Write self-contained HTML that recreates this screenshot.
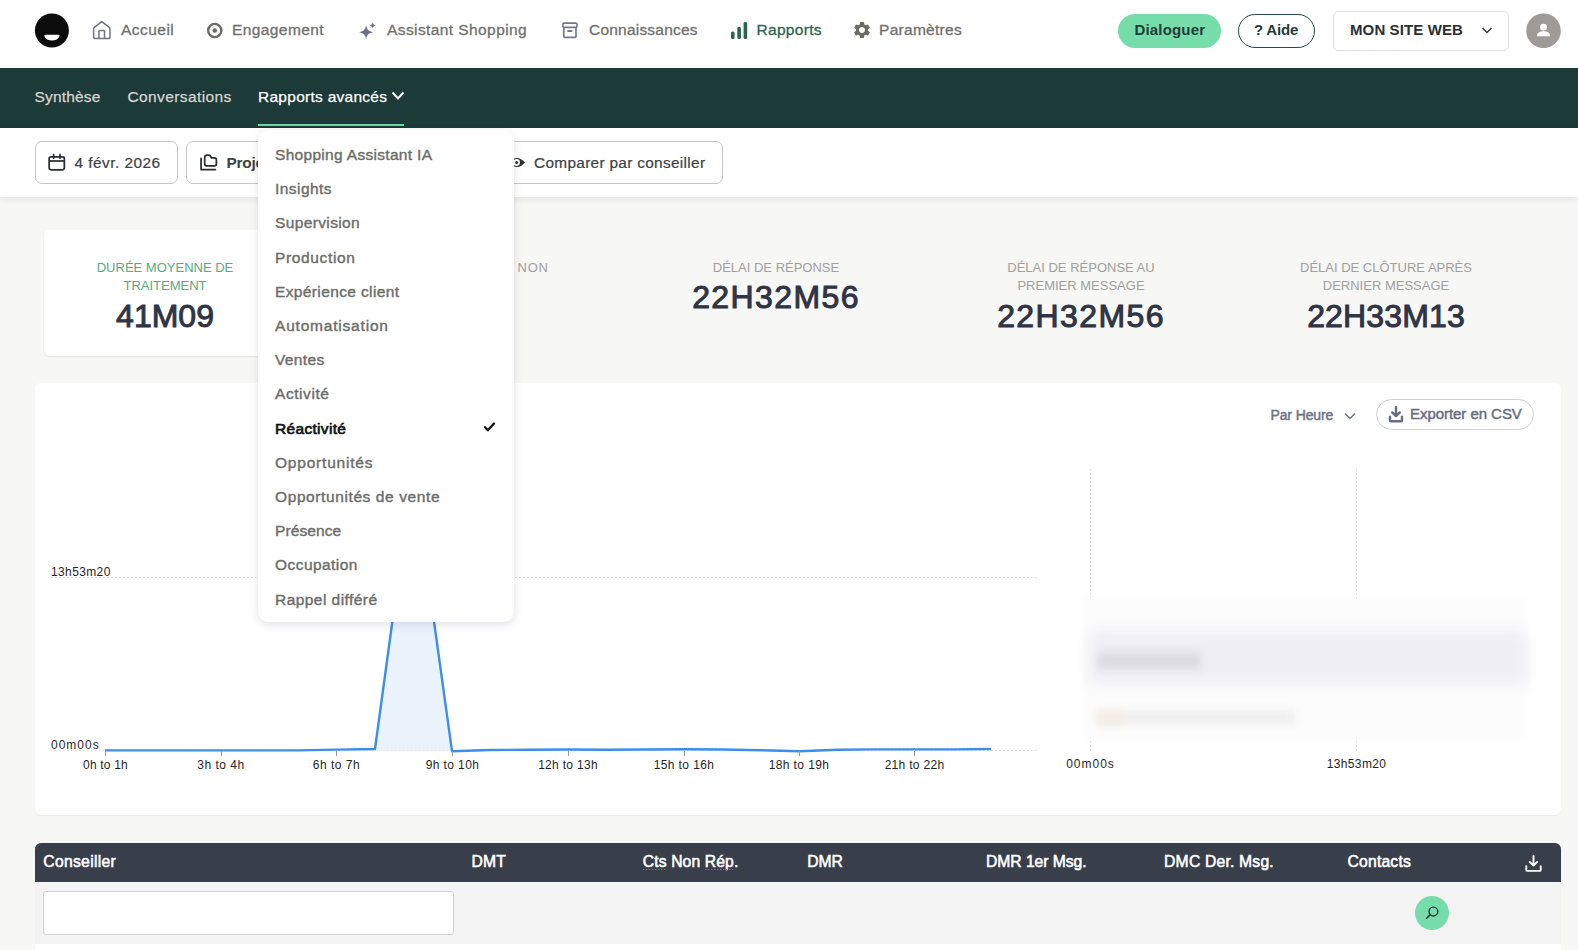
<!DOCTYPE html>
<html><head><meta charset="utf-8">
<style>
*{box-sizing:border-box;margin:0;padding:0}
html,body{width:1578px;height:950px;overflow:hidden;background:#f7f7f5;font-family:"Liberation Sans",sans-serif}
.a{position:absolute}
.t{position:absolute;white-space:nowrap;line-height:1}
#top{position:absolute;left:0;top:0;width:1578px;height:68px;background:#fff}
#sub{position:absolute;left:0;top:68px;width:1578px;height:60px;background:#1c3a38}
#filt{position:absolute;left:0;top:128px;width:1578px;height:69px;background:#fff;box-shadow:0 2px 7px rgba(60,60,100,.10)}
.nav{top:21.8px;font-size:15.5px;color:#70706c;-webkit-text-stroke:.3px currentColor}
.sn{top:88.5px;font-size:15.5px;color:#d8d6ce;-webkit-text-stroke:.25px currentColor}
.btn{position:absolute;top:141px;height:43px;border:1px solid #c6c6c6;border-radius:7px;background:#fff}
.bt{top:155px;font-size:15.4px;color:#3d4044;-webkit-text-stroke:.2px currentColor}
.kl{font-size:13px;color:#a0a09e;text-align:center;line-height:18.3px;text-transform:uppercase}
.kv{font-size:32px;font-weight:normal;-webkit-text-stroke:1px #2f3446;color:#2f3446;text-align:center}
#card{position:absolute;left:35px;top:383px;width:1526px;height:432px;background:#fff;border-radius:6px;box-shadow:0 1px 1px rgba(0,0,0,.05)}
.xl{top:759.3px;font-size:12px;color:#1f1f1f;transform:translateX(-50%)}
#th{position:absolute;left:35px;top:843px;width:1526px;height:39px;background:#393e4b;border-radius:6px 6px 0 0}
.th{top:854px;font-size:15.7px;color:#fff;font-weight:normal;-webkit-text-stroke:.55px #fff}
#fr{position:absolute;left:35px;top:882px;width:1526px;height:62px;background:#f3f3f3}
#tb{position:absolute;left:35px;top:944px;width:1526px;height:10px;background:#fff}
#dd{position:absolute;left:258px;top:130px;width:256px;height:492px;background:#fff;border-radius:10px;box-shadow:0 3px 10px rgba(50,50,90,.13)}
.di{left:275px;font-size:15.5px;color:#6c6c69;font-weight:normal;-webkit-text-stroke:.4px currentColor;letter-spacing:.45px}
</style></head><body>
<!-- TOP BAR -->
<div id="top"></div>
<svg class="a" style="left:34px;top:13px" width="36" height="36" viewBox="0 0 36 36"><circle cx="17.9" cy="17.55" r="17" fill="#0b0c0b"/><path d="M10.2 22.7 Q10.5 21.8 11.8 21.8 H24.1 Q25.4 21.8 25.7 22.7 C24.6 26 21.5 27.5 17.95 27.5 C14.4 27.5 11.3 26 10.2 22.7Z" fill="#fff"/></svg>
<svg class="a" style="left:92px;top:20px" width="20" height="20" viewBox="0 0 20 20" fill="none" stroke="#6f748b" stroke-width="1.5" stroke-linejoin="round"><path d="M1.6 8.7 Q1.6 7.9 2.3 7.4 L9.8 1.6 L17.3 7.4 Q18 7.9 18 8.7 V16.8 Q18 18.6 16.2 18.6 H3.4 Q1.6 18.6 1.6 16.8 Z"/><path d="M6.9 18.6 V11.6 Q6.9 10.6 7.9 10.6 H11.5 Q12.5 10.6 12.5 11.6 V18.6"/></svg>
<div class="t nav" style="left:121px;letter-spacing:.46px">Accueil</div>
<svg class="a" style="left:205px;top:21px" width="19" height="19" viewBox="0 0 19 19"><circle cx="9.75" cy="9.5" r="6.6" fill="none" stroke="#6b6b68" stroke-width="2.4"/><circle cx="9.75" cy="9.5" r="2.35" fill="#6b6b68"/></svg>
<div class="t nav" style="left:232px;letter-spacing:.41px">Engagement</div>
<svg class="a" style="left:357px;top:20px" width="20" height="20" viewBox="0 0 20 20" fill="#6b7086"><path d="M9.10 5.30 C10.07 9.85 11.45 11.23 16.00 12.20 C11.45 13.17 10.07 14.55 9.10 19.10 C8.13 14.55 6.75 13.17 2.20 12.20 C6.75 11.23 8.13 9.85 9.10 5.30Z"/><path d="M15.70 2.20 C16.15 4.31 16.79 4.95 18.90 5.40 C16.79 5.85 16.15 6.49 15.70 8.60 C15.25 6.49 14.61 5.85 12.50 5.40 C14.61 4.95 15.25 4.31 15.70 2.20Z"/></svg>
<div class="t nav" style="left:387px;letter-spacing:.41px">Assistant Shopping</div>
<svg class="a" style="left:561px;top:21px" width="18" height="19" viewBox="0 0 18 19" fill="none" stroke="#717790" stroke-width="1.65" stroke-linejoin="round"><rect x="1.8" y="2.1" width="14.2" height="4.3" rx="1.4"/><path d="M2.8 6.4 V15.6 Q2.8 16.4 3.6 16.4 H14.2 Q15 16.4 15 15.6 V6.4"/><path d="M7.1 10 H10.6" stroke-width="2" stroke-linecap="round"/></svg>
<div class="t nav" style="left:589px;letter-spacing:.21px">Connaissances</div>
<svg class="a" style="left:731px;top:21px" width="17" height="18" viewBox="0 0 17 18" fill="#2b6350"><rect x="0" y="10.5" width="3.6" height="7.5" rx="1.6"/><rect x="6.3" y="5.8" width="3.6" height="12.2" rx="1.6"/><rect x="12.6" y="1" width="3.6" height="17" rx="1.6"/></svg>
<div class="t nav" style="left:756.5px;color:#2b6350;letter-spacing:.31px">Rapports</div>
<svg class="a" style="left:852px;top:20px" width="20" height="20" viewBox="0 0 24 24" fill="#6b6b68"><path d="M19.14 12.94c.04-.3.06-.61.06-.94 0-.32-.02-.64-.07-.94l2.03-1.58a.49.49 0 0 0 .12-.61l-1.92-3.32a.488.488 0 0 0-.59-.22l-2.39.96c-.5-.38-1.030-.7-1.62-.94l-.36-2.540a.484.484 0 0 0-.48-.41h-3.84c-.24 0-.43.17-.47.41l-.36 2.54c-.59.24-1.13.57-1.62.94l-2.39-.96c-.22-.08-.47 0-.59.22L2.74 8.87c-.12.21-.08.47.12.61l2.03 1.58c-.05.3-.09.63-.09.94s.02.64.07.94l-2.03 1.58a.49.49 0 0 0-.12.61l1.92 3.32c.12.22.37.29.59.22l2.39-.96c.5.38 1.03.7 1.62.94l.36 2.54c.05.24.24.41.48.41h3.84c.24 0 .44-.17.47-.41l.36-2.54c.59-.24 1.13-.56 1.62-.94l2.39.96c.22.08.47 0 .59-.22l1.920-3.32c.12-.22.07-.47-.12-.61l-2.01-1.58zM12 15.6c-1.98 0-3.6-1.62-3.6-3.6s1.62-3.6 3.6-3.6 3.6 1.62 3.6 3.6-1.62 3.6-3.6 3.6z"/></svg>
<div class="t nav" style="left:879px;letter-spacing:.29px">Paramètres</div>

<div class="a" style="left:1118px;top:14px;width:103px;height:34px;border-radius:17px;background:#76dca9"></div>
<div class="t" style="left:1134.5px;top:21.6px;font-size:15px;font-weight:bold;color:#1f3d3a;letter-spacing:.17px">Dialoguer</div>
<div class="a" style="left:1238px;top:14px;width:77px;height:34px;border-radius:17px;border:1.6px solid #264a44"></div>
<div class="t" style="left:1254px;top:21.6px;font-size:15px;font-weight:bold;color:#1f3d3a;letter-spacing:-.2px">? Aide</div>
<div class="a" style="left:1333px;top:11px;width:176px;height:40px;border-radius:5px;border:1px solid #dedede"></div>
<div class="t" style="left:1350px;top:21.6px;font-size:15px;font-weight:bold;color:#2b2f34;letter-spacing:.11px">MON SITE WEB</div>
<svg class="a" style="left:1481px;top:26px" width="12" height="9" viewBox="0 0 12 9" fill="none" stroke="#3a3a3a" stroke-width="1.5"><path d="M1.5 2 L6 6.5 L10.5 2"/></svg>
<svg class="a" style="left:1526px;top:13px" width="35" height="35" viewBox="0 0 35 35"><circle cx="17.5" cy="17.8" r="17.3" fill="#9c9b96"/><circle cx="17.5" cy="14.2" r="3.4" fill="#fff"/><path d="M10.8 23.3 Q11.2 18.3 17.5 18.3 Q23.8 18.3 24.2 23.3 Z" fill="#fff"/></svg>

<!-- SUBNAV -->
<div id="sub"></div>
<div class="t sn" style="left:34.5px;letter-spacing:.17px">Synthèse</div>
<div class="t sn" style="left:127.5px;letter-spacing:.39px">Conversations</div>
<div class="t sn" style="left:258px;color:#fff;letter-spacing:.27px">Rapports avancés</div>
<svg class="a" style="left:391px;top:91px" width="14" height="10" viewBox="0 0 14 10" fill="none" stroke="#fff" stroke-width="2"><path d="M1.5 1.5 L7 7.5 L12.5 1.5"/></svg>
<div class="a" style="left:258px;top:124px;width:146px;height:2.3px;background:#6cd9a4"></div>

<!-- FILTER BAR -->
<div id="filt"></div>
<div class="btn" style="left:34.5px;width:143px"></div>
<svg class="a" style="left:47px;top:153px" width="20" height="19" viewBox="0 0 20 19" fill="none" stroke="#2b2e35" stroke-width="1.75" stroke-linejoin="round"><rect x="2.15" y="3.85" width="15.2" height="12.9" rx="1.9"/><path d="M2.15 8 H17.35"/><path d="M6.6 1.6 V5.2 M13 1.6 V5.2" stroke-linecap="round"/></svg>
<div class="t bt" style="left:74.6px;letter-spacing:.45px">4 févr. 2026</div>
<div class="btn" style="left:186px;width:200px"></div>
<svg class="a" style="left:199px;top:153px" width="20" height="19" viewBox="0 0 20 19" fill="none" stroke="#2b2e35" stroke-width="1.75" stroke-linejoin="round" stroke-linecap="round"><path d="M2.06 5.3 V16.5 H16.4"/><path d="M5.7 4.5 Q5.7 2 8 2 H9.9 Q10.6 2 11.1 2.6 L12.6 4.9 H15.4 Q17.4 4.9 17.4 6.9 V11 Q17.4 12.8 15.6 12.8 H7.5 Q5.7 12.8 5.7 11 Z"/></svg>
<div class="t bt" style="left:226.5px;font-weight:bold;letter-spacing:-.25px;-webkit-text-stroke:0">Projets</div>
<div class="btn" style="left:490px;width:233px"></div>
<svg class="a" style="left:508px;top:155px" width="18" height="15" viewBox="0 0 18 15" ><path d="M1 7.5 Q9 -1.5 17 7.5 Q9 16.5 1 7.5Z" fill="#2f3338"/><circle cx="8.6" cy="7.5" r="3.4" fill="#fff"/><circle cx="8.6" cy="7.5" r="1.5" fill="#2f3338"/></svg>
<div class="t bt" style="left:534px;letter-spacing:.31px">Comparer par conseiller</div>

<!-- KPIs -->
<div class="a" style="left:44px;top:229.5px;width:244px;height:126.5px;background:#fff;border-radius:6px;box-shadow:0 1px 2px rgba(0,0,0,.07)"></div>
<div class="t kl" style="left:43px;top:259px;width:244px;color:#55ab80">DURÉE MOYENNE DE<br>TRAITEMENT</div>
<div class="t kv" style="left:43px;top:300px;width:244px;letter-spacing:0">41M09</div>
<div class="t kl" style="left:300px;top:259px;width:248px;text-align:right">NB CONTACTS&nbsp;&nbsp;<span style="letter-spacing:.85px;margin-right:-.85px">NON</span></div><div class="t kl" style="left:348px;top:277.3px;width:244px">RÉPONDUES</div>
<div class="t kl" style="left:654px;top:259px;width:244px">DÉLAI DE RÉPONSE</div>
<div class="t kv" style="left:654px;top:281px;width:244px;letter-spacing:1.4px">22H32M56</div>
<div class="t kl" style="left:959px;top:259px;width:244px">DÉLAI DE RÉPONSE AU<br>PREMIER MESSAGE</div>
<div class="t kv" style="left:959px;top:300px;width:244px;letter-spacing:1.4px">22H32M56</div>
<div class="t kl" style="left:1264px;top:259px;width:244px">DÉLAI DE CLÔTURE APRÈS<br>DERNIER MESSAGE</div>
<div class="t kv" style="left:1264px;top:300px;width:244px;letter-spacing:.15px">22H33M13</div>

<!-- CHART CARD -->
<div id="card"></div>
<div class="t" style="left:1270.4px;top:408.4px;font-size:14px;color:#6c7282;-webkit-text-stroke:.45px #6c7282;letter-spacing:-.1px">Par Heure</div>
<svg class="a" style="left:1344px;top:412px" width="12" height="9" viewBox="0 0 12 9" fill="none" stroke="#6c7282" stroke-width="1.4"><path d="M1 1.5 L6 6.5 L11 1.5"/></svg>
<div class="a" style="left:1376px;top:399px;width:158px;height:31px;border:1px solid #cdd0d8;border-radius:16px"></div>
<svg class="a" style="left:1388px;top:406px" width="16" height="17" viewBox="0 0 16 17"><path d="M8 1.2 V10 M4.2 6.4 L8 10.2 L11.8 6.4" fill="none" stroke="#666d80" stroke-width="2.4" stroke-linecap="round" stroke-linejoin="round"/><path d="M2 10.6 V14.6 Q2 15.3 2.7 15.3 H13.3 Q14 15.3 14 14.6 V10.6" fill="none" stroke="#666d80" stroke-width="2.4" stroke-linecap="round" stroke-linejoin="round"/></svg>
<div class="t" style="left:1410px;top:406.1px;font-size:15px;color:#666d80;-webkit-text-stroke:.45px #666d80;letter-spacing:-.05px">Exporter en CSV</div>

<svg class="a" style="left:0;top:0" width="1578" height="950">
  <line x1="51" y1="577.5" x2="1037" y2="577.5" stroke="#d6d6d6" stroke-dasharray="1.5 2.5"/>
  <line x1="51" y1="750.5" x2="1037" y2="750.5" stroke="#d6d6d6" stroke-dasharray="1.5 2.5"/>
  <line x1="1090.5" y1="469" x2="1090.5" y2="751" stroke="#d6d6d6" stroke-dasharray="1.5 2.5"/>
  <line x1="1356.5" y1="469" x2="1356.5" y2="751" stroke="#d6d6d6" stroke-dasharray="1.5 2.5"/>
  <polygon points="375,749.5 413,470 452,751 452,750.5 375,750.5" fill="#eaf2fc"/>
  <polyline points="105,750.4 144,750.4 182,750.4 221,750.4 259,750.4 298,750.4 336,749.6 375,749 413,470 452,751.2 490,750 529,749.7 568,749.5 606,749.7 645,749.5 684,749.2 722,749.5 761,750.2 799,751.2 838,749.8 876,749.4 914,749.4 953,749.4 991,749" fill="none" stroke="#3d8eea" stroke-width="2.4" stroke-linejoin="round"/>
  <g stroke="#9a9a9a" stroke-width="1">
    <line x1="105.5" y1="751" x2="105.5" y2="756"/><line x1="221.5" y1="751" x2="221.5" y2="756"/><line x1="336.5" y1="751" x2="336.5" y2="756"/><line x1="452.5" y1="751" x2="452.5" y2="756"/><line x1="568.5" y1="751" x2="568.5" y2="756"/><line x1="684.5" y1="751" x2="684.5" y2="756"/><line x1="799.5" y1="751" x2="799.5" y2="756"/><line x1="914.5" y1="751" x2="914.5" y2="756"/>
  </g>
</svg>
<div class="t" style="left:51px;top:565.7px;font-size:12px;color:#1f1f1f;letter-spacing:.37px">13h53m20</div>
<div class="t" style="left:51px;top:738.7px;font-size:12px;color:#1f1f1f;letter-spacing:1px">00m00s</div>
<div class="t xl" style="left:105.5px;letter-spacing:.2px">0h to 1h</div>
<div class="t xl" style="left:221px;letter-spacing:.5px">3h to 4h</div>
<div class="t xl" style="left:336.5px;letter-spacing:.5px">6h to 7h</div>
<div class="t xl" style="left:452.5px;letter-spacing:.4px">9h to 10h</div>
<div class="t xl" style="left:568px;letter-spacing:.3px">12h to 13h</div>
<div class="t xl" style="left:684px;letter-spacing:.4px">15h to 16h</div>
<div class="t xl" style="left:799px;letter-spacing:.4px">18h to 19h</div>
<div class="t xl" style="left:914.5px;letter-spacing:.3px">21h to 22h</div>
<div class="t xl" style="left:1090.5px;top:758.3px;letter-spacing:1px">00m00s</div>
<div class="t xl" style="left:1356.5px;top:758.3px;letter-spacing:.37px">13h53m20</div>
<!-- blurred legend -->
<div class="a" style="left:1082px;top:597px;width:446px;height:143px;background:#fcfcfc;filter:blur(3px)"></div>
<div class="a" style="left:1090px;top:632px;width:436px;height:52px;background:#eeeef4;filter:blur(7px)"></div>
<div class="a" style="left:1097px;top:653px;width:104px;height:16px;background:#dcdae1;filter:blur(4px)"></div>
<div class="a" style="left:1097px;top:711px;width:198px;height:14px;background:#f0efef;filter:blur(4px)"></div>
<div class="a" style="left:1097px;top:712px;width:26px;height:12px;background:#f4ede6;filter:blur(3px)"></div>

<!-- TABLE -->
<div id="th"></div>
<div class="t th" style="left:43.3px;letter-spacing:0.3px">Conseiller</div>
<div class="t th" style="left:471.4px;letter-spacing:0.25px">DMT</div>
<div class="t th" style="left:642.8px;letter-spacing:0.12px">Cts Non Rép.</div>
<svg class="a" style="left:642px;top:868px" width="95" height="4"><line x1="1" y1="1.5" x2="23" y2="1.5" stroke="#e0524f" stroke-width="1.2" stroke-dasharray="1.5 1.5"/><line x1="63" y1="1.5" x2="93" y2="1.5" stroke="#e0524f" stroke-width="1.2" stroke-dasharray="1.5 1.5"/></svg>
<div class="t th" style="left:807.2px;letter-spacing:-0.05px">DMR</div>
<div class="t th" style="left:986px;letter-spacing:-0.05px">DMR 1er Msg.</div>
<div class="t th" style="left:1164.1px;letter-spacing:0.2px">DMC Der. Msg.</div>
<div class="t th" style="left:1347.5px;letter-spacing:0.2px">Contacts</div>
<svg class="a" style="left:1524px;top:854px" width="19" height="19" viewBox="0 0 19 19" fill="none" stroke="#fff" stroke-width="1.9" stroke-linecap="round" stroke-linejoin="round"><path d="M9.5 1.8 V11.5 M5.8 7.9 L9.5 11.6 L13.2 7.9"/><path d="M2.3 12.3 V15.9 Q2.3 16.9 3.3 16.9 H15.7 Q16.7 16.9 16.7 15.9 V12.3"/></svg>
<div id="fr"></div><div id="tb"></div>
<div class="a" style="left:43.3px;top:891.4px;width:410.5px;height:43.3px;background:#fff;border:1px solid #d2d2d6;border-radius:3px"></div>
<svg class="a" style="left:1415px;top:896px" width="34" height="34" viewBox="0 0 34 34"><circle cx="17" cy="17" r="17" fill="#76dca9"/><circle cx="18.4" cy="15.5" r="4.4" fill="none" stroke="#1f3d3a" stroke-width="1.45"/><path d="M15.3 18.6 L11.6 22.3" stroke="#1f3d3a" stroke-width="1.5" stroke-linecap="round"/></svg>

<!-- DROPDOWN -->
<div id="dd"></div>
<div class="t di" style="top:146.9px;letter-spacing:0.31px">Shopping Assistant IA</div>
<div class="t di" style="top:181.1px">Insights</div>
<div class="t di" style="top:215.3px;letter-spacing:0.37px">Supervision</div>
<div class="t di" style="top:249.5px;letter-spacing:0.65px">Production</div>
<div class="t di" style="top:283.7px;letter-spacing:0.375px">Expérience client</div>
<div class="t di" style="top:317.9px;letter-spacing:.8px">Automatisation</div>
<div class="t di" style="top:352.1px;letter-spacing:.36px">Ventes</div>
<div class="t di" style="top:386.3px;letter-spacing:0.57px">Activité</div>
<div class="t di" style="top:420.5px;letter-spacing:.32px;color:#121212;-webkit-text-stroke:.7px #121212">Réactivité</div>
<svg class="a" style="left:483px;top:421px" width="13" height="12" viewBox="0 0 13 12" fill="none" stroke="#111" stroke-width="2.3" stroke-linecap="round" stroke-linejoin="round"><path d="M2 6.3 L4.9 9.3 L11 2.5"/></svg>
<div class="t di" style="top:454.7px;letter-spacing:.79px">Opportunités</div>
<div class="t di" style="top:488.9px;letter-spacing:.6px">Opportunités de vente</div>
<div class="t di" style="top:523.1px;letter-spacing:0.1px">Présence</div>
<div class="t di" style="top:557.3px">Occupation</div>
<div class="t di" style="top:591.5px">Rappel différé</div>
</body></html>
